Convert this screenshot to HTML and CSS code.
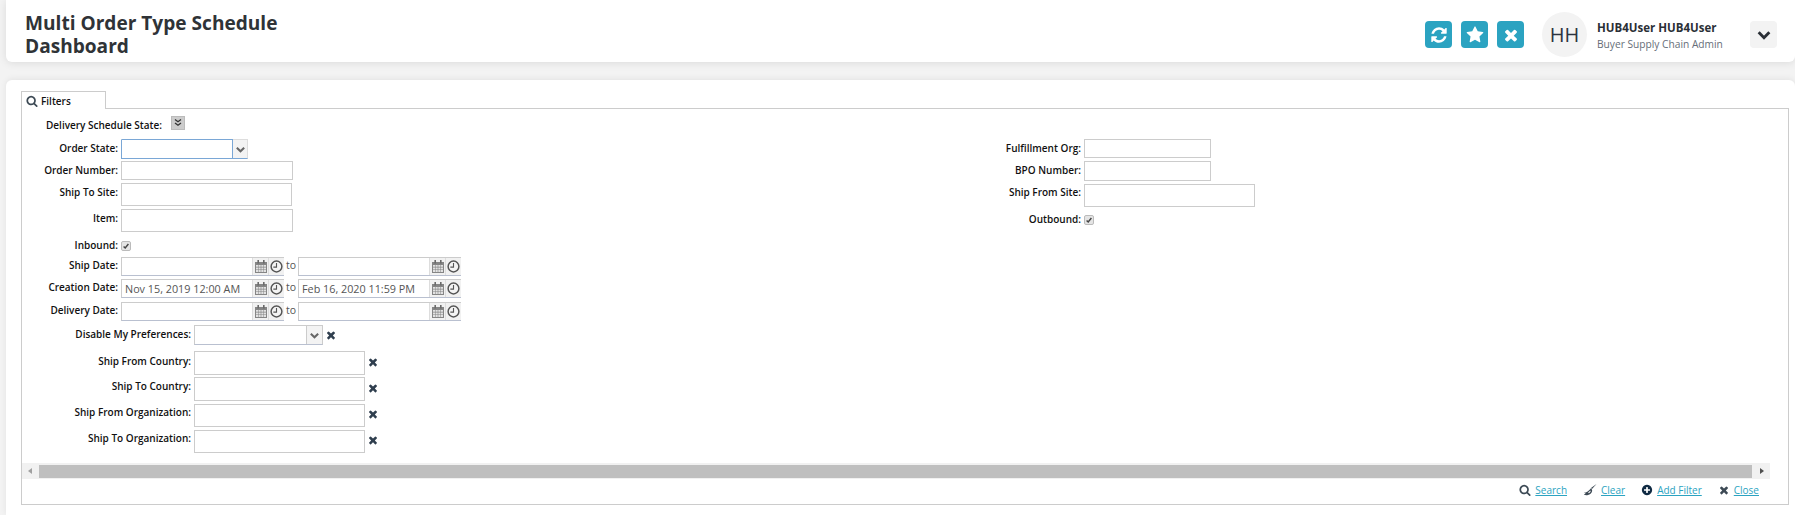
FILE: index.html
```html
<!DOCTYPE html>
<html lang="en">
<head>
<meta charset="utf-8">
<title>Multi Order Type Schedule Dashboard</title>
<link rel="stylesheet" href="styles.css">
</head>
<body>
<svg class="defs" width="0" height="0" aria-hidden="true">
  <symbol id="i-star" viewBox="0 0 1792 1792"><path d="M1728 647q0 22-26 48l-363 354 86 500q1 7 1 20 0 21-10.5 35.5t-30.5 14.5q-19 0-40-12l-449-236-449 236q-22 12-40 12-21 0-31.5-14.5t-10.5-35.5q0-6 2-20l86-500-364-354q-25-27-25-48 0-37 56-46l502-73 225-455q19-41 49-41t49 41l225 455 502 73q56 9 56 46z"/></symbol>
  <symbol id="i-times" viewBox="0 0 1792 1792"><path d="M1490 1322q0 40-28 68l-136 136q-28 28-68 28t-68-28l-294-294-294 294q-28 28-68 28t-68-28l-136-136q-28-28-28-68t28-68l294-294-294-294q-28-28-28-68t28-68l136-136q28-28 68-28t68 28l294 294 294-294q28-28 68-28t68 28l136 136q28 28 28 68t-28 68l-294 294 294 294q28 28 28 68z"/></symbol>
  <symbol id="i-refresh" viewBox="0 0 1792 1792"><path d="M1639 1056q0 5-1 7-64 268-268 434.5t-478 166.5q-146 0-282.5-55t-243.5-157l-129 129q-19 19-45 19t-45-19-19-45v-448q0-26 19-45t45-19h448q26 0 45 19t19 45-19 45l-137 137q71 66 161 102t187 36q134 0 250-65t186-179q11-17 53-117 8-23 30-23h192q13 0 22.5 9.5t9.5 22.5zm25-800v448q0 26-19 45t-45 19h-448q-26 0-45-19t-19-45 19-45l138-138q-148-137-349-137-134 0-250 65t-186 179q-11 17-53 117-8 23-30 23h-199q-13 0-22.5-9.5t-9.5-22.5v-7q65-268 270-434.5t480-166.5q146 0 284 55.5t245 156.5l130-129q19-19 45-19t45 19 19 45z"/></symbol>
  <symbol id="i-search" viewBox="0 0 1792 1792"><path d="M1216 832q0-185-131.5-316.5t-316.5-131.5-316.5 131.5-131.5 316.5 131.5 316.5 316.5 131.5 316.5-131.5 131.5-316.5zm512 832q0 52-38 90t-90 38q-54 0-90-38l-343-342q-179 124-399 124-143 0-273.5-55.5t-225-150-150-225-55.5-273.5 55.5-273.5 150-225 225-150 273.5-55.5 273.5 55.5 225 150 150 225 55.5 273.5q0 220-124 399l343 343q37 37 37 90z"/></symbol>
  <symbol id="i-plus" viewBox="0 0 1792 1792"><path d="M1344 960v-128q0-26-19-45t-45-19h-256v-256q0-26-19-45t-45-19h-128q-26 0-45 19t-19 45v256h-256q-26 0-45 19t-19 45v128q0 26 19 45t45 19h256v256q0 26 19 45t45 19h128q26 0 45-19t19-45v-256h256q26 0 45-19t19-45zm320-64q0 209-103 385.5t-279.5 279.5-385.5 103-385.5-103-279.5-279.5-103-385.5 103-385.5 279.5-279.5 385.5-103 385.5 103 279.5 279.5 103 385.5z"/></symbol>
  <symbol id="i-cal" viewBox="0 0 12 13"><path d="M0 2h12v11H0z" fill="#858585"/><path d="M1 5h2.100v1.800H1zM3.600 5h2.100v1.800H3.600zM6.300 5h2.100v1.800H6.300zM8.900 5h2.100v1.800H8.900zM1 7.400h2.100v1.800H1zM3.600 7.400h2.100v1.800H3.600zM6.300 7.400h2.100v1.800H6.300zM8.900 7.400h2.100v1.800H8.900zM1 9.800h2.100V12H1zM3.600 9.800h2.100V12H3.600zM6.300 9.800h2.100V12H6.300zM8.900 9.800h2.100V12H8.900z" fill="#e2e2e2"/><path d="M2.400 0h1.600v3.500H2.400zM8 0h1.600v3.500H8z" fill="#6a6a6a"/></symbol>
  <symbol id="i-clock" viewBox="0 0 14 14"><circle cx="7" cy="7" r="5.800" fill="#f4f4f4" stroke="#555" stroke-width="1.600"/><path d="M7 3.300V7.700H3.600" fill="none" stroke="#555" stroke-width="1.200"/></symbol>
  <symbol id="i-chev" viewBox="0 0 12 12"><path d="M2 4l4 4 4-4" fill="none" stroke="currentColor" stroke-width="2.200"/></symbol>
  <symbol id="i-check" viewBox="0 0 10 10"><path d="M2 5.500l2 2 4-5" fill="none" stroke="#444" stroke-width="1.800"/></symbol>
  <symbol id="i-broom" viewBox="0 0 14 12"><path d="M13.500 0L9 5 8 4Z" fill="#3d4a55"/><path d="M8 4.200C8.800 5 9.500 6 9 7.500 8.500 9.300 7 10.500 5 11 3.500 11.400 2 11.200 .8 10.500L2.800 9.300 .8 8.800C3.500 8.500 6 7 8 4.200Z" fill="#3d4a55"/><path d="M5 8.800L7.300 6.600 7.600 7.800 6 9.300Z" fill="#fff"/></symbol>
</svg>

<header class="topbar">
  <h1 class="title">Multi Order Type Schedule<br>Dashboard</h1>
  <div class="top-actions">
    <button class="act"><svg class="act-ic"><use href="#i-refresh"/></svg></button>
    <button class="act"><svg class="act-ic"><use href="#i-star"/></svg></button>
    <button class="act"><svg class="act-ic"><use href="#i-times"/></svg></button>
    <div class="avatar">HH</div>
    <div class="user">
      <div class="user-name">HUB4User HUB4User</div>
      <div class="user-role">Buyer Supply Chain Admin</div>
    </div>
    <button class="menu-btn"><svg class="menu-ic"><use href="#i-chev"/></svg></button>
  </div>
</header>

<main class="card">
  <div class="tabs">
    <div class="tab"><svg class="tab-ic"><use href="#i-search"/></svg><span>Filters</span></div>
  </div>
  <section class="panel">
    <div class="state-row">
      <span class="state-label">Delivery Schedule State:</span>
      <span class="state-btn"><svg class="state-ic" viewBox="0 0 10 10"><path d="M2 1.500l3 2.200 3-2.200M2 5l3 2.200 3-2.200" fill="none" stroke="#333" stroke-width="1.400"/></svg></span>
    </div>

    <div class="columns">
      <div class="col-left">
        <div class="row r-22"><label class="lbl">Order State:</label><span class="combo focus"><span class="combo-in"></span><span class="combo-btn"><svg class="chev"><use href="#i-chev"/></svg></span></span></div>
        <div class="row r-22"><label class="lbl">Order Number:</label><input class="in w172 h19"></div>
        <div class="row r-26"><label class="lbl">Ship To Site:</label><input class="in w171 h23"></div>
        <div class="row r-30"><label class="lbl">Item:</label><input class="in w172 h23"></div>
        <div class="row r-18"><label class="lbl lbl-up">Inbound:</label><span class="chk"><svg class="chk-ic"><use href="#i-check"/></svg></span></div>
        <div class="row r-22"><label class="lbl lbl-d">Ship Date:</label>
          <span class="date"><span class="date-in"></span><span class="date-ic"><svg class="cal"><use href="#i-cal"/></svg></span><span class="date-ic"><svg class="clk"><use href="#i-clock"/></svg></span></span>
          <span class="to">to</span>
          <span class="date"><span class="date-in"></span><span class="date-ic"><svg class="cal"><use href="#i-cal"/></svg></span><span class="date-ic"><svg class="clk"><use href="#i-clock"/></svg></span></span>
        </div>
        <div class="row r-23"><label class="lbl lbl-d">Creation Date:</label>
          <span class="date"><span class="date-in">Nov 15, 2019 12:00 AM</span><span class="date-ic"><svg class="cal"><use href="#i-cal"/></svg></span><span class="date-ic"><svg class="clk"><use href="#i-clock"/></svg></span></span>
          <span class="to">to</span>
          <span class="date"><span class="date-in">Feb 16, 2020 11:59 PM</span><span class="date-ic"><svg class="cal"><use href="#i-cal"/></svg></span><span class="date-ic"><svg class="clk"><use href="#i-clock"/></svg></span></span>
        </div>
        <div class="row r-23"><label class="lbl lbl-d">Delivery Date:</label>
          <span class="date"><span class="date-in"></span><span class="date-ic"><svg class="cal"><use href="#i-cal"/></svg></span><span class="date-ic"><svg class="clk"><use href="#i-clock"/></svg></span></span>
          <span class="to">to</span>
          <span class="date"><span class="date-in"></span><span class="date-ic"><svg class="cal"><use href="#i-cal"/></svg></span><span class="date-ic"><svg class="clk"><use href="#i-clock"/></svg></span></span>
        </div>
        <div class="row wide r-26"><label class="lbl">Disable My Preferences:</label><span class="combo combo-wide"><span class="combo-in"></span><span class="combo-btn"><svg class="chev"><use href="#i-chev"/></svg></span></span><svg class="x x-pref"><use href="#i-times"/></svg></div>
        <div class="row wide r-26"><label class="lbl lbl-dn">Ship From Country:</label><input class="in w171 h24"><svg class="x"><use href="#i-times"/></svg></div>
        <div class="row wide r-27"><label class="lbl">Ship To Country:</label><input class="in w171 h24"><svg class="x"><use href="#i-times"/></svg></div>
        <div class="row wide r-26"><label class="lbl lbl-d">Ship From Organization:</label><input class="in w171 h23"><svg class="x x-up"><use href="#i-times"/></svg></div>
        <div class="row wide r-26"><label class="lbl lbl-d">Ship To Organization:</label><input class="in w171 h23"><svg class="x x-up"><use href="#i-times"/></svg></div>
      </div>
      <div class="col-right">
        <div class="row r-22"><label class="lbl">Fulfillment Org:</label><input class="in w127 h19"></div>
        <div class="row r-23"><label class="lbl">BPO Number:</label><input class="in w127 h20"></div>
        <div class="row r-29"><label class="lbl lbl-d">Ship From Site:</label><input class="in w171 h23"></div>
        <div class="row r-18"><label class="lbl lbl-up">Outbound:</label><span class="chk"><svg class="chk-ic"><use href="#i-check"/></svg></span></div>
      </div>
    </div>

    <div class="hscroll">
      <span class="arrow arrow-l"></span>
      <span class="thumb"></span>
      <span class="arrow arrow-r"></span>
    </div>

    <div class="links">
      <span class="lnk"><svg class="lnk-ic"><use href="#i-search"/></svg><a>Search</a></span>
      <span class="lnk"><svg class="lnk-ic broom"><use href="#i-broom"/></svg><a>Clear</a></span>
      <span class="lnk"><svg class="lnk-ic plus"><use href="#i-plus"/></svg><a>Add Filter</a></span>
      <span class="lnk"><svg class="lnk-ic"><use href="#i-times"/></svg><a>Close</a></span>
    </div>
  </section>
</main>
</body>
</html>
```
FILE: styles.css
```css
* { box-sizing: border-box; }
html, body { margin: 0; height: 515px; overflow: hidden; }
body {
  background: #f3f3f3;
  font-family: "Open Sans", sans-serif;
  color: #212b36;
  padding-left: 6px;
}
.defs { position: absolute; }
.topbar {
  height: 62px;
  background: #fff;
  border-radius: 0 0 6px 6px;
  box-shadow: 0 1px 8px rgba(0,0,0,.1);
  display: flex;
  justify-content: space-between;
  padding: 12px 18px 0 19px;
}
.title {
  margin: 0;
  font-size: 19.100px;
  line-height: 22.500px;
  font-weight: 700;
  color: #2f3337;
}
.top-actions { display: flex; align-items: flex-start; padding-top: 9px; }
.act {
  width: 27px; height: 27px; border: 0; padding: 0; margin-right: 9px;
  background: #2ba3c1; border-radius: 4px; color: #fff;
  display: flex; align-items: center; justify-content: center;
}
.act-ic { width: 18px; height: 18px; fill: #fff; }
.avatar {
  width: 45px; height: 45px; margin: -9px 0 0 9px; border-radius: 50%;
  background: #f3f3f3; color: #2c3440;
  font-size: 20px; line-height: 45px; text-align: center;
}
.user { margin: -1px 0 0 10px; width: 153px; }
.user-name { font-size: 11.500px; line-height: 16px; font-weight: 700; color: #2a2f36; }
.user-role { font-size: 10.200px; line-height: 16px; color: #666e78; }
.menu-btn {
  width: 27px; height: 27px; border: 0; padding: 0; background: #f3f3f3; border-radius: 4px;
  color: #2a2f36; display: flex; align-items: center; justify-content: center;
}
.menu-ic { width: 16px; height: 16px; }

.card {
  height: 435px; margin-top: 18px; background: #fff;
  border-radius: 6px 6px 0 0;
  box-shadow: 0 -1px 6px rgba(0,0,0,.07);
  padding: 11px 6px 0 15px;
}
.tabs { height: 17px; display: flex; }
.tab {
  width: 85px; height: 18px; background: #fff; border: 1px solid #ccc; border-bottom: 0;
  display: flex; align-items: center; padding-left: 4px;
  font-size: 10px; font-weight: 600; color: #111; position: relative; z-index: 1;
}
.tab-ic { width: 12px; height: 12px; fill: #3d4a55; margin-right: 3px; }
.panel { height: 397px; border: 1px solid #ccc; padding: 0; display: flex; flex-direction: column; }

.state-row { height: 30px; padding: 7px 0 0 24px; display: flex; align-items: flex-start; }
.state-label { width: 125px; font-size: 10px; line-height: 18px; font-weight: 600; color: #111; }
.state-btn { width: 14px; height: 14px; background: #ccc; border: 1px solid #bbb; display: flex; align-items: center; justify-content: center; }
.state-ic { width: 10px; height: 10px; }

.columns { display: flex; height: 324px; }
.col-left { width: 960px; }
.col-right { flex: 1; }
.row { display: flex; align-items: flex-start; }
.lbl {
  width: 96px; margin-right: 3px; text-align: right; flex: none;
  font-size: 10px; line-height: 18px; font-weight: 600; color: #111;
  white-space: nowrap;
}
.wide .lbl { width: 169px; }
.lbl-d { line-height: 17px; }
.lbl-dn { line-height: 20px; }
.lbl-up { margin-top: -3px; }
.col-right .lbl { width: 99px; }
.in { display: block; border: 1px solid #ccc; background: #fff; padding: 0; margin: 0; outline: 0; border-radius: 0; }
.w172 { width: 172px; } .w171 { width: 171px; } .w127 { width: 127px; }
.h19 { height: 19px; } .h20 { height: 20px; } .h23 { height: 23px; } .h24 { height: 24px; }
.r-18 { height: 18px; } .r-22 { height: 22px; } .r-23 { height: 23px; } .r-26 { height: 26px; }
.r-27 { height: 27px; } .r-29 { height: 29px; } .r-30 { height: 30px; }
.combo { display: flex; height: 20px; width: 127px; border: 1px solid #ccc; border-bottom-color: #b9c0d0; }
.combo-in { width: 111px; border-right: 1px solid #ccc; }
.combo.focus { border-color: #ddd #ddd #7aa7d6 #7aa7d6; }
.focus .combo-in { border-top: 1px solid #7aa7d6; border-right-color: #7aa7d6; margin-top: -1px; }
.combo-btn { flex: 1; background: #f3f3f3; color: #666; display: flex; align-items: center; justify-content: center; }
.chev { width: 11px; height: 11px; }
.combo-wide { width: 129px; }
.combo-wide .combo-in { width: 112px; }
.x { width: 12px; height: 12px; margin: 5px 0 0 2px; fill: #2f3e4e; flex: none; }
.x-pref { margin: 4px 0 0 2px; }
.x-up { margin-top: 4px; }
.chk { width: 10px; height: 10px; margin-top: 2px; background: #e4e4e4; border: 1px solid #bbb; border-radius: 2px; display: flex; }
.chk-ic { width: 8px; height: 8px; }
.date { display: flex; width: 163px; height: 19px; border: 1px solid #ccc; border-right: 0; border-bottom-color: #b9c0d0; }
.date-in { width: 130px; font-size: 10.800px; line-height: 18px; padding-left: 3px; color: #555; white-space: nowrap; overflow: hidden; }
.date-ic { width: 16px; background: #f1f1f1; display: flex; align-items: center; justify-content: center; border-left: 1px solid #ddd; }
.cal { width: 12px; height: 13px; }
.clk { width: 13px; height: 13px; }
.to { width: 14px; text-align: center; font-size: 10.500px; line-height: 17px; color: #555; }

.hscroll { width: 1748px; height: 16px; background: #f1f1f1; display: flex; align-items: center; }
.thumb { flex: 1; height: 13px; background: #bfbfbf; }
.arrow { height: 100%; display: flex; align-items: center; }
.arrow-l { width: 17px; }
.arrow-r { width: 18px; }
.arrow-l::after { content: ""; margin-left: 6px; border: 3.500px solid transparent; border-left: 0; border-right: 4px solid #a0a0a0; }
.arrow-r::after { content: ""; margin-left: 8px; border: 3.500px solid transparent; border-right: 0; border-left: 4px solid #505050; }

.links { display: flex; justify-content: flex-end; padding: 2px 29px 0 0; }
.lnk { display: flex; align-items: center; font-size: 10px; line-height: 18px; }
.lnk + .lnk { margin-left: 16px; }
.lnk a { color: #2ba3c1; text-decoration: underline; }
.lnk-ic { width: 12px; height: 12px; fill: #3d4a55; margin-right: 4px; }
.broom { width: 14px; }
.plus { fill: #102a43; }
```
